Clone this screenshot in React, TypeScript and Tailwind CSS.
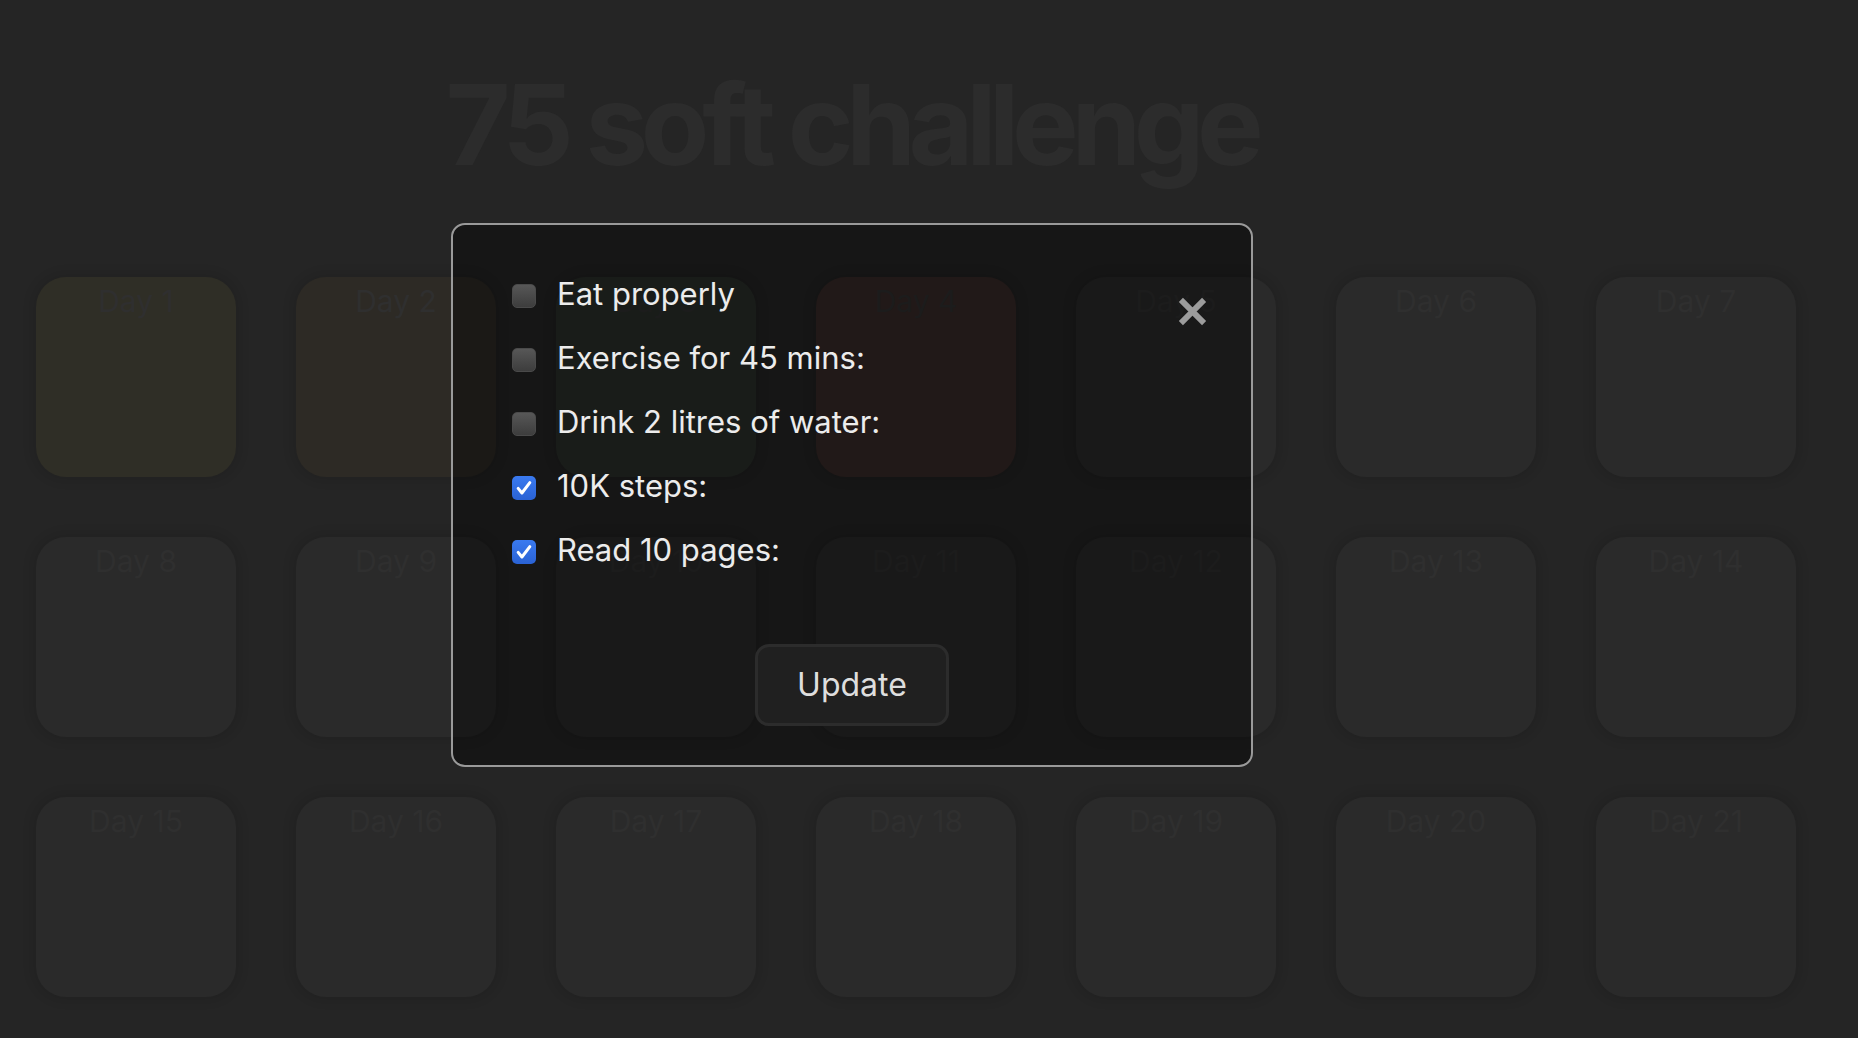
import React from 'react';

type Task = { label: string; done: boolean };

const tasks: Task[] = [
  { label: 'Eat properly', done: false },
  { label: 'Exercise for 45 mins:', done: false },
  { label: 'Drink 2 litres of water:', done: false },
  { label: '10K steps:', done: true },
  { label: 'Read 10 pages:', done: true },
];

// tint per day; the rest are plain
const dayTint: Record<number, string> = {
  1: 'bg-[#2f2e26]',
  2: 'bg-[#2d2a25]',
  3: 'bg-[#2b302b]',
  4: 'bg-[#382a28]',
};

const Checkbox: React.FC<{ checked: boolean }> = ({ checked }) =>
  checked ? (
    <div className="w-6 h-6 rounded-[5px] bg-gradient-to-b from-[#3a7af0] to-[#2a62d4] flex items-center justify-center shrink-0">
      <svg viewBox="0 0 24 24" className="w-5 h-5" fill="none" stroke="white" strokeWidth={3.6} strokeLinecap="round" strokeLinejoin="round">
        <path d="M5 12.5l4.5 5.5L19 5.5" />
      </svg>
    </div>
  ) : (
    <div className="w-6 h-6 rounded-[5px] bg-gradient-to-b from-[#575757] to-[#3d3d3d] border border-[#4a4a4a] shrink-0" />
  );

const DayCard: React.FC<{ day: number }> = ({ day }) => (
  <div
    className={`w-[200px] h-[200px] rounded-[30px] shadow-[0_0_8px_6px_rgba(0,0,0,0.07)] flex justify-center pt-[9px] ${
      dayTint[day] ?? 'bg-[#2a2a2a]'
    }`}
  >
    <span className="text-[30px] leading-none text-[#2f2f2f]">Day {day}</span>
  </div>
);

export default function App() {
  const days = Array.from({ length: 75 }, (_, i) => i + 1);

  return (
    <div className="relative w-full h-screen overflow-hidden bg-[#252525] font-['Inter','Noto_Sans',sans-serif]">
      <div className="w-[1702px] pt-[68px] text-center">
        <h1 className="text-[112px] leading-none font-bold tracking-[-0.066em] text-[#2c2c2c]">75 soft challenge</h1>
      </div>

      <div className="grid grid-cols-[repeat(7,200px)] gap-[60px] pl-[36px] pt-[97px]">
        {days.map((d) => (
          <DayCard key={d} day={d} />
        ))}
      </div>

      {/* modal */}
      <div className="absolute left-[451px] top-[223px] w-[802px] h-[544px] rounded-[14px] border-2 border-[#9a9a9a] bg-[rgba(0,0,0,0.4)] flex flex-col pt-[39px] pb-[39px]">
        <button className="absolute left-[723px] top-[70px] w-8 h-8 flex items-center justify-center">
          <svg viewBox="0 0 30 30" className="w-[29px] h-[29px]" stroke="#9c9c9c" strokeWidth={6}>
            <path d="M3 3L27 27M27 3L3 27" />
          </svg>
        </button>

        <div className="flex flex-col pl-[59px]">
          {tasks.map((t) => (
            <label key={t.label} className="h-16 flex items-center gap-[21px]">
              <Checkbox checked={t.done} />
              <span className="text-[31px] leading-none text-[#ececec] -mt-[6px]">{t.label}</span>
            </label>
          ))}
        </div>

        <button className="self-center mt-[60px] w-[194px] h-[82px] rounded-[14px] border-[3px] border-[#2c2c2c] bg-[#202020] text-[32px] text-[#dedede]">
          Update
        </button>
      </div>
    </div>
  );
}
